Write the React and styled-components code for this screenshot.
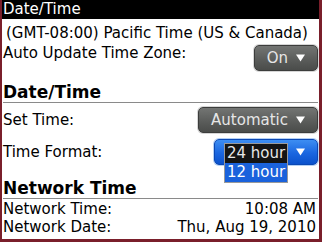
import React from "react";
import styled, { createGlobalStyle } from "styled-components";

const GlobalStyle = createGlobalStyle`
  html, body {
    margin: 0;
    padding: 0;
    background: #ffffff;
  }
  body {
    font-family: "DejaVu Sans", "Liberation Sans", sans-serif;
  }
`;

const App = () => (
  <>
    <GlobalStyle />
    <Screen>
      <TitleBar>Date/Time</TitleBar>
      <Body>
        <ZoneLine>(GMT-08:00) Pacific Time (US &amp; Canada)</ZoneLine>
        <Row $height={30}>
          <Label $top={2}>Auto Update Time Zone:</Label>
          <Choice $top={3}>
            On <Arrow />
          </Choice>
        </Row>
        <Section $top={10}>Date/Time</Section>
        <Row $height={32}>
          <Label $top={8}>Set Time:</Label>
          <Choice $top={4}>
            Automatic <Arrow />
          </Choice>
        </Row>
        <Row $height={33}>
          <Label $top={8}>Time Format:</Label>
          <Choice $top={4} $active $width={104}>
            <Arrow />
            <PickList>
              <PickItem>24 hour</PickItem>
              <PickItem $selected>12 hour</PickItem>
            </PickList>
          </Choice>
        </Row>
        <Section $top={10}>Network Time</Section>
        <InfoRow $top={1}>
          <span>Network Time:</span>
          <span>10:08 AM</span>
        </InfoRow>
        <InfoRow>
          <span>Network Date:</span>
          <span>Thu, Aug 19, 2010</span>
        </InfoRow>
      </Body>
    </Screen>
  </>
);

export default App;

const Screen = styled.div`
  width: 322px;
  height: 242px;
  box-sizing: border-box;
  border-left: 2px solid #7a1f2b;
  border-right: 3px solid #7a1f2b;
  border-bottom: 3px solid #7a1f2b;
  background: #ffffff;
  color: #000000;
  overflow: hidden;
`;

const TitleBar = styled.div`
  height: 19px;
  background: #000000;
  color: #ffffff;
  font-size: 15px;
  line-height: 19px;
  padding-left: 1px;
`;

const Body = styled.div`
  padding: 0 1px 0 1px;
  font-size: 15px;
`;

const ZoneLine = styled.div`
  margin-top: 5px;
  height: 18px;
  line-height: 18px;
  padding-left: 3px;
  white-space: nowrap;
`;

const Row = styled.div`
  display: flex;
  justify-content: space-between;
  align-items: flex-start;
  height: ${({ $height }) => $height}px;
`;

const Label = styled.div`
  margin-top: ${({ $top }) => $top}px;
  line-height: 18px;
  white-space: nowrap;
`;

const Choice = styled.div`
  position: relative;
  margin-top: ${({ $top }) => $top}px;
  height: 26px;
  width: ${({ $width }) => ($width ? `${$width}px` : "auto")};
  box-sizing: border-box;
  display: flex;
  align-items: center;
  justify-content: flex-end;
  gap: 8px;
  padding: 0 12px 0 12px;
  border-radius: 5px;
  border: 1px solid ${({ $active }) => ($active ? "#0b48b4" : "#3c3d3c")};
  background: ${({ $active }) =>
    $active
      ? "linear-gradient(#3d8ef2, #1a66e0 55%, #0c52cc)"
      : "linear-gradient(#737573, #5b5d5b 55%, #4a4c4a)"};
  box-shadow: 0 0 0 1px ${({ $active }) => ($active ? "#b4d0f4" : "#d6d6d6")};
  color: #e6e6e6;
  font-size: 15px;
  white-space: nowrap;
`;

const ArrowGlyph = styled.svg`
  width: 9px;
  height: 8px;
  flex: none;
`;

const Arrow = () => (
  <ArrowGlyph viewBox="0 0 9 8">
    <path d="M0 0.5 H9 L4.5 7.5 Z" fill="#ffffff" />
  </ArrowGlyph>
);

const PickList = styled.div`
  position: absolute;
  left: 9px;
  top: 3px;
  width: 64px;
  border: 1px solid #9a9a9a;
  box-sizing: border-box;
`;

const PickItem = styled.div`
  height: 19px;
  line-height: 19px;
  padding-left: 2px;
  font-size: 15px;
  background: ${({ $selected }) => ($selected ? "#1a62dc" : "#141414")};
  color: ${({ $selected }) => ($selected ? "#ffffff" : "#e8e8e8")};
`;

const Section = styled.div`
  margin-top: ${({ $top }) => $top}px;
  height: 20px;
  line-height: 20px;
  font-size: 17px;
  font-weight: bold;
  border-bottom: 1px solid #8a8a8a;
  white-space: nowrap;
`;

const InfoRow = styled.div`
  display: flex;
  justify-content: space-between;
  margin-top: ${({ $top }) => $top || 0}px;
  height: 18px;
  line-height: 18px;
  padding-right: 2px;
  white-space: nowrap;
`;
